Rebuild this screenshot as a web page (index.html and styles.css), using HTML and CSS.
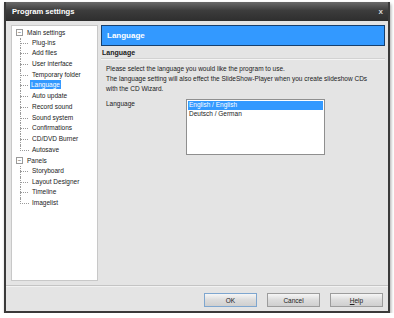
FILE: index.html
```html
<!DOCTYPE html>
<html>
 <head>
  <meta charset="utf-8">
  <link rel="stylesheet" href="styles.css">
 </head>
 <body>
  <div class="window">
   <div class="titlebar">
    <span class="title">Program settings</span>
    <span class="close">x</span>
   </div>
   <div class="content">
    <ul class="tree">
     <li class="node">
      <div class="root"><span class="box">&minus;</span>Main settings</div>
      <ul class="children">
       <li>Plug-ins</li>
       <li>Add files</li>
       <li>User interface</li>
       <li>Temporary folder</li>
       <li><span class="sel">Language</span></li>
       <li>Auto update</li>
       <li>Record sound</li>
       <li>Sound system</li>
       <li>Confirmations</li>
       <li>CD/DVD Burner</li>
       <li class="last">Autosave</li>
      </ul>
     </li>
     <li class="node">
      <div class="root"><span class="box">&minus;</span>Panels</div>
      <ul class="children">
       <li>Storyboard</li>
       <li>Layout Designer</li>
       <li>Timeline</li>
       <li class="last">Imagelist</li>
      </ul>
     </li>
    </ul>
    <div class="main">
     <div class="banner">Language</div>
     <div class="section">Language</div>
     <p class="info">Please select the language you would like the program to use.<br>
     The language setting will also effect the SlideShow-Player when you create slideshow CDs<br>
     with the CD Wizard.</p>
     <div class="row">
      <span class="label">Language</span>
      <ul class="listbox">
       <li class="picked">English / English</li>
       <li>Deutsch / German</li>
      </ul>
     </div>
    </div>
   </div>
   <div class="buttons">
    <button class="btn default">OK</button>
    <button class="btn">Cancel</button>
    <button class="btn"><u>H</u>elp</button>
   </div>
  </div>
 </body>
</html>
```
FILE: styles.css
```css
body {
  margin: 0;
  background: #ffffff;
  font-family: 'Liberation Sans', Arial, sans-serif;
  font-size: 6.5px;
  color: #1a1a1a;
}

.window {
  margin: 2px 0 0 4px;
  width: 382px;
  height: 309px;
  border: 2px solid #3a3a3a;
  border-top: none;
  background: #e4e4e4;
  box-shadow: 1px 2px 3px rgba(0, 0, 0, 0.35);
  display: flex;
  flex-direction: column;
}

.titlebar {
  height: 19px;
  background: linear-gradient(#6a6a6a, #3c3c3c 45%, #2e2e2e);
  display: flex;
  align-items: center;
  justify-content: space-between;
  padding: 0 5px 0 6px;
  color: #ffffff;
}
.title {
  font-weight: bold;
  font-size: 7.6px;
}
.close {
  font-weight: bold;
  font-size: 8px;
  color: #d8d8d8;
}

.content {
  display: flex;
  gap: 3px;
  padding: 4px 3px 0 5px;
  height: 260px;
  border-bottom: 1px solid #c4c4c4;
}

/* tree */
.tree {
  list-style: none;
  margin: 0;
  padding: 1px 0 0 4px;
  width: 81px;
  height: 253px;
  background: #ffffff;
  border: 1px solid #c8c8c8;
}
.tree ul {
  list-style: none;
  margin: 0;
  padding: 0;
}
.root {
  display: flex;
  align-items: center;
  height: 10.7px;
}
.box {
  width: 5px;
  height: 5px;
  border: 1px solid #9a9a9a;
  font-size: 6px;
  line-height: 5px;
  text-align: center;
  color: #333;
  margin-right: 4px;
  background: #fff;
}
.children {
  margin-left: 4px !important;
}
.children li {
  height: 10.7px;
  line-height: 10.7px;
  padding-left: 11px;
  border-left: 1px dotted #9a9a9a;
  position: relative;
}
.children li.last {
  border-left-color: transparent;
}
.children li::before {
  content: "";
  position: absolute;
  left: -1px;
  top: 0;
  width: 8px;
  height: 5px;
  border-bottom: 1px dotted #9a9a9a;
}
.children li.last::before {
  border-left: 1px dotted #9a9a9a;
}
.sel {
  background: #3399ff;
  color: #ffffff;
  padding: 1px 1px;
  margin-left: -2px;
}

/* main panel */
.main {
  flex: 1;
}
.banner {
  height: 19px;
  background: #3399ff;
  border: 1px solid #17406e;
  color: #ffffff;
  font-weight: bold;
  font-size: 8px;
  line-height: 19px;
  padding-left: 5px;
}
.section {
  font-weight: bold;
  font-size: 7px;
  margin-top: 3px;
  padding: 0 0 2px 1px;
  border-bottom: 1px solid #d2d2d2;
  box-shadow: 0 1px 0 #f4f4f4;
}
.info {
  margin: 5px 0 0 5px;
  line-height: 10px;
}
.row {
  display: flex;
  margin: 5px 0 0 5px;
}
.label {
  width: 80px;
  padding-top: 1px;
}
.listbox {
  list-style: none;
  margin: 0;
  padding: 1px;
  width: 135px;
  height: 52px;
  background: #ffffff;
  border: 1px solid #8f8f8f;
}
.listbox li {
  height: 8.5px;
  line-height: 8.5px;
  padding-left: 1px;
}
.listbox li.picked {
  background: #3399ff;
  color: #ffffff;
}

/* bottom buttons */
.buttons {
  flex: 1;
  display: flex;
  justify-content: flex-end;
  align-items: flex-start;
  gap: 10px;
  padding: 6px 5px 0 0;
  border-top: 1px solid #f2f2f2;
}
.btn {
  width: 53px;
  height: 14px;
  font-family: 'Liberation Sans', Arial, sans-serif;
  font-size: 6.5px;
  color: #222;
  background: linear-gradient(#f6f6f6, #dcdcdc 50%, #cfcfcf);
  border: 1px solid #9c9c9c;
  padding: 0;
}
.btn.default {
  border-color: #7ea6cf;
}
```
